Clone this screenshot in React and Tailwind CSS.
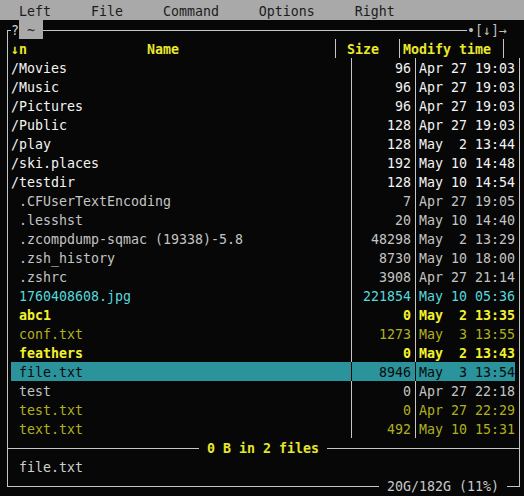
import React from "react";

const files = [
  { name: "/Movies", size: "96", date: "Apr 27 19:03", kind: "dir" },
  { name: "/Music", size: "96", date: "Apr 27 19:03", kind: "dir" },
  { name: "/Pictures", size: "96", date: "Apr 27 19:03", kind: "dir" },
  { name: "/Public", size: "128", date: "Apr 27 19:03", kind: "dir" },
  { name: "/play", size: "128", date: "May  2 13:44", kind: "dir" },
  { name: "/ski.places", size: "192", date: "May 10 14:48", kind: "dir" },
  { name: "/testdir", size: "128", date: "May 10 14:54", kind: "dir" },
  { name: " .CFUserTextEncoding", size: "7", date: "Apr 27 19:05", kind: "file" },
  { name: " .lesshst", size: "20", date: "May 10 14:40", kind: "file" },
  { name: " .zcompdump-sqmac (19338)-5.8", size: "48298", date: "May  2 13:29", kind: "file" },
  { name: " .zsh_history", size: "8730", date: "May 10 18:00", kind: "file" },
  { name: " .zshrc", size: "3908", date: "Apr 27 21:14", kind: "file" },
  { name: " 1760408608.jpg", size: "221854", date: "May 10 05:36", kind: "img" },
  { name: " abc1", size: "0", date: "May  2 13:35", kind: "exe" },
  { name: " conf.txt", size: "1273", date: "May  3 13:55", kind: "txt" },
  { name: " feathers", size: "0", date: "May  2 13:43", kind: "exe" },
  { name: " file.txt", size: "8946", date: "May  3 13:54", kind: "sel" },
  { name: " test", size: "0", date: "Apr 27 22:18", kind: "file" },
  { name: " test.txt", size: "0", date: "Apr 27 22:29", kind: "txt" },
  { name: " text.txt", size: "492", date: "May 10 15:31", kind: "txt" },
];

const kindClass = {
  dir: "text-[#f4f4f4]",
  file: "text-[#c4c4c4]",
  img: "text-[#56d8de]",
  exe: "text-[#f2f22c] font-bold",
  txt: "text-[#b0b01e]",
  sel: "text-[#0a0a0a] bg-[#2a939b]",
};

// one 8px terminal cell with a vertical rule through its middle
const VLine = ({ dark }) => (
  <div className="w-2 h-full pl-1 shrink-0">
    <div className={`h-full border-l ${dark ? "border-[#0a0a0a]" : "border-[#c6c6c6]"}`} />
  </div>
);

const HLine = () => (
  <div className="flex-1 pt-[10px]">
    <div className="border-t border-[#c6c6c6]" />
  </div>
);

const Row = ({ children, className = "" }) => (
  <div className={`flex h-[19px] w-[520px] leading-[22px] whitespace-pre ${className}`}>{children}</div>
);

const FileRow = ({ f }) => {
  const sel = f.kind === "sel";
  return (
    <Row>
      <VLine />
      <div className={`flex h-full ${kindClass[f.kind]}`}>
        <div className="w-[336px] overflow-hidden">{f.name}</div>
        <VLine dark={sel} />
        <div className="w-[56px] text-right">{f.size}</div>
        <VLine dark={sel} />
        <div className="w-[96px]">{f.date}</div>
      </div>
      <VLine />
    </Row>
  );
};

export default function App() {
  return (
    <div className="w-[524px] h-[496px] overflow-hidden bg-[#070707] font-['DejaVu_Sans_Mono',monospace] text-[13.29px]">
      {/* menu bar */}
      <div className="h-[20px] bg-[#a9a9a9] text-[#1c1c1c] pl-[3px] leading-[24px] whitespace-pre">
        {"  Left     File     Command     Options     Right"}
      </div>

      <div className="pl-[3px]">
        {/* top border */}
        <Row>
          <div className="w-2 h-full pl-1 pt-[10px] shrink-0">
            <div className="h-full border-l border-t border-[#c6c6c6]" />
          </div>
          <div className="w-2 text-[#d4d4d4]">?</div>
          <div className="w-6 bg-[#a9a9a9] text-[#2a2a2a]">{" ~ "}</div>
          <HLine />
          <div className="w-[40px] text-[#bdbdbd]">•[↓]→</div>
          <div className="w-4" />
        </Row>

        {/* column header */}
        <Row className="font-bold text-[#e9e92b]">
          <VLine />
          <div className="w-[320px]">{"↓n               Name"}</div>
          <VLine />
          <div className="w-[56px]">{" Size"}</div>
          <VLine />
          <div className="w-[96px]">Modify time</div>
          <VLine />
          <div className="w-4" />
        </Row>

        {files.map((f) => (
          <FileRow key={f.name} f={f} />
        ))}

        {/* totals separator */}
        <Row>
          <div className="w-2 h-full pl-1 shrink-0 flex">
            <div className="h-full border-l border-[#c6c6c6]" />
            <div className="flex-1 pt-[10px]">
              <div className="border-t border-[#c6c6c6]" />
            </div>
          </div>
          <HLine />
          <div className="w-[128px] font-bold text-[#e6e62a]">{" 0 B in 2 files "}</div>
          <HLine />
          <div className="w-2 h-full pr-[3px] shrink-0 flex">
            <div className="flex-1 pt-[10px]">
              <div className="border-t border-[#c6c6c6]" />
            </div>
            <div className="h-full border-r border-[#c6c6c6]" />
          </div>
        </Row>

        {/* mini status */}
        <Row>
          <VLine />
          <div className="flex-1 text-[#d0d0d0]">{" file.txt"}</div>
          <VLine />
        </Row>

        {/* bottom border */}
        <Row>
          <div className="w-2 h-full pl-1 pb-[8px] shrink-0">
            <div className="h-full border-l border-b border-[#c6c6c6]" />
          </div>
          <HLine />
          <div className="w-[128px] text-[#c8c8c8]">{" 20G/182G (11%) "}</div>
          <div className="w-2 pt-[10px]">
            <div className="border-t border-[#c6c6c6]" />
          </div>
          <div className="w-2 h-full pr-[3px] pb-[8px] shrink-0">
            <div className="h-full border-r border-b border-[#c6c6c6]" />
          </div>
        </Row>
      </div>
    </div>
  );
}
